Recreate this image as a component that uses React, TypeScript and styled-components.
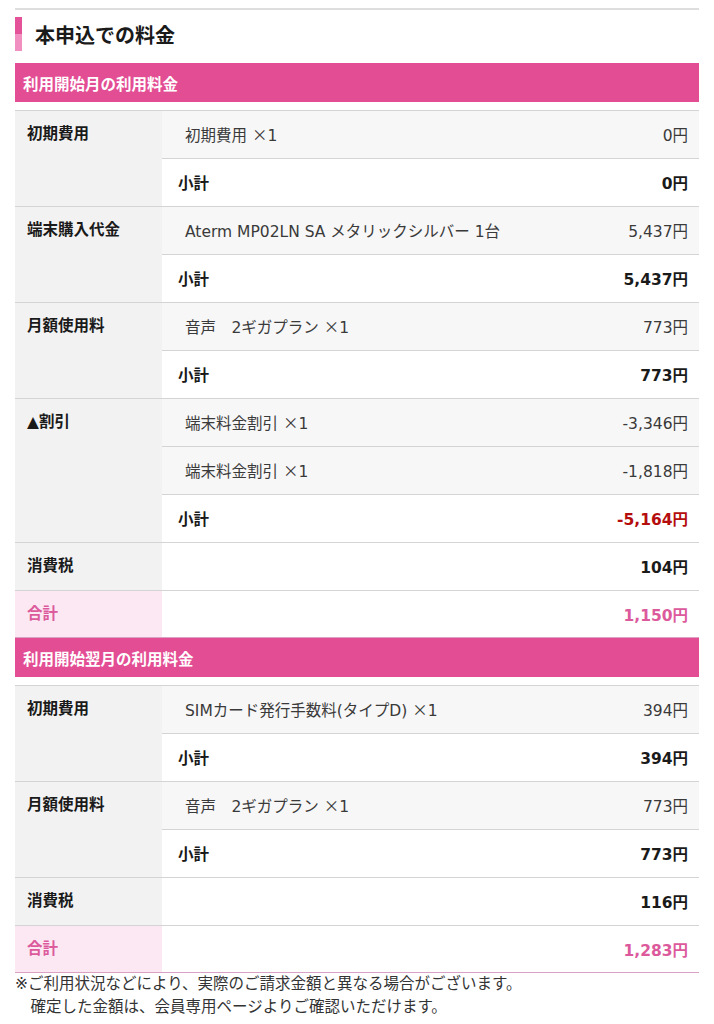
import React from "react";
import styled, { createGlobalStyle } from "styled-components";

const GlobalStyle = createGlobalStyle`
  body {
    margin: 0;
    background: #fff;
    font-family: "DejaVu Sans", "Noto Sans CJK JP", sans-serif;
    color: #333;
  }
`;

type Item = { name: string; amount: string };
type Group = { label: string; items: Item[]; subtotal: string; negative?: boolean };
type Section = { title: string; groups: Group[]; tax: string; total: string };

const sections: Section[] = [
  {
    title: "利用開始月の利用料金",
    groups: [
      { label: "初期費用", items: [{ name: "初期費用 ×1", amount: "0円" }], subtotal: "0円" },
      {
        label: "端末購入代金",
        items: [{ name: "Aterm MP02LN SA メタリックシルバー 1台", amount: "5,437円" }],
        subtotal: "5,437円",
      },
      { label: "月額使用料", items: [{ name: "音声　2ギガプラン ×1", amount: "773円" }], subtotal: "773円" },
      {
        label: "▲割引",
        items: [
          { name: "端末料金割引 ×1", amount: "-3,346円" },
          { name: "端末料金割引 ×1", amount: "-1,818円" },
        ],
        subtotal: "-5,164円",
        negative: true,
      },
    ],
    tax: "104円",
    total: "1,150円",
  },
  {
    title: "利用開始翌月の利用料金",
    groups: [
      {
        label: "初期費用",
        items: [{ name: "SIMカード発行手数料(タイプD) ×1", amount: "394円" }],
        subtotal: "394円",
      },
      { label: "月額使用料", items: [{ name: "音声　2ギガプラン ×1", amount: "773円" }], subtotal: "773円" },
    ],
    tax: "116円",
    total: "1,283円",
  },
];

const Page = styled.div`
  padding: 8px 15px 0;
`;

const TopRule = styled.div`
  height: 2px;
  background: #dedede;
`;

const Heading = styled.h2`
  display: flex;
  align-items: center;
  gap: 13px;
  height: 34px;
  margin: 7px 0 12px;
  font-family: "Noto Sans CJK JP", sans-serif;
  font-size: 20px;
  font-weight: 700;
  color: #1a1a1a;
  &::before {
    content: "";
    width: 7px;
    height: 34px;
    background: linear-gradient(#e4529a 0 50%, #f08fc0 50% 100%);
  }
`;

const SectionTitle = styled.div`
  height: 39px;
  display: flex;
  align-items: center;
  padding-left: 8px;
  margin-bottom: 8px;
  background: #e34d94;
  color: #fff;
  font-size: 15.5px;
  font-weight: 700;
`;

const Table = styled.table`
  width: 100%;
  border-collapse: collapse;
  border-top: 1px solid #d4d4d4;
  font-size: 15.5px;
`;

const Label = styled.th<{ $total?: boolean }>`
  width: 135px;
  padding: 0 0 0 12px;
  vertical-align: top;
  text-align: left;
  line-height: 46px;
  font-weight: 700;
  background: ${(p) => (p.$total ? "#fbe8f3" : "#f2f2f2")};
  color: ${(p) => (p.$total ? "#dc5a9c" : "#1a1a1a")};
  border-bottom: 1px solid ${(p) => (p.$total ? "#d9a2c2" : "#d4d4d4")};
`;

const Row = styled.tr<{ $total?: boolean }>`
  height: ${(p) => (p.$total ? "47px" : "48px")};
  ${(p) => p.$total && "border-top: 1px solid #d9a2c2;"}
`;

const Name = styled.td<{ $sub?: boolean; $tone?: "pink" }>`
  padding: 0 0 1px ${(p) => (p.$sub ? "16px" : "23px")};
  background: ${(p) => (p.$sub ? "#fff" : "#f7f7f7")};
  font-weight: ${(p) => (p.$sub ? 700 : 400)};
  color: ${(p) => (p.$sub ? "#1a1a1a" : "#3a3a3a")};
  border-bottom: 1px solid ${(p) => (p.$tone === "pink" ? "#d9a2c2" : "#d4d4d4")};
  white-space: nowrap;
`;

const Times = styled.span`
  font-family: "Noto Sans CJK JP", sans-serif;
`;

const Amount = styled.td<{ $sub?: boolean; $tone?: "red" | "pink" }>`
  padding: 0 11px 1px 0;
  text-align: right;
  background: ${(p) => (p.$sub ? "#fff" : "#f7f7f7")};
  font-weight: ${(p) => (p.$sub ? 700 : 400)};
  color: ${(p) =>
    p.$tone === "red" ? "#b50d0d" : p.$tone === "pink" ? "#dc5a9c" : p.$sub ? "#1a1a1a" : "#3a3a3a"};
  border-bottom: 1px solid ${(p) => (p.$tone === "pink" ? "#d9a2c2" : "#d4d4d4")};
  white-space: nowrap;
`;

const Note = styled.div`
  font-size: 15.5px;
  line-height: 23px;
  color: #333;
`;

const NoteLine = styled.div<{ $indent?: boolean }>`
  padding-left: ${(p) => (p.$indent ? "1em" : "0")};
`;

function ItemName({ text }: { text: string }) {
  const parts = text.split("×");
  if (parts.length < 2) return <>{text}</>;
  return (
    <>
      {parts[0]}
      <Times>×</Times>
      {parts[1]}
    </>
  );
}

function FeeSection({ section }: { section: Section }) {
  return (
    <>
      <SectionTitle>{section.title}</SectionTitle>
      <Table>
        <tbody>
          {section.groups.map((g, gi) => {
            const span = g.items.length + 1;
            return (
              <React.Fragment key={gi}>
                {g.items.map((it, ii) => (
                  <Row key={ii}>
                    {ii === 0 && <Label rowSpan={span}>{g.label}</Label>}
                    <Name>
                      <ItemName text={it.name} />
                    </Name>
                    <Amount>{it.amount}</Amount>
                  </Row>
                ))}
                <Row>
                  <Name $sub>小計</Name>
                  <Amount $sub $tone={g.negative ? "red" : undefined}>
                    {g.subtotal}
                  </Amount>
                </Row>
              </React.Fragment>
            );
          })}
          <Row>
            <Label>消費税</Label>
            <Name $sub />
            <Amount $sub>{section.tax}</Amount>
          </Row>
          <Row $total>
            <Label $total>合計</Label>
            <Name $sub $tone="pink" />
            <Amount $sub $tone="pink">
              {section.total}
            </Amount>
          </Row>
        </tbody>
      </Table>
    </>
  );
}

export default function App() {
  return (
    <>
      <GlobalStyle />
      <Page>
        <TopRule />
        <Heading>本申込での料金</Heading>
        {sections.map((s, i) => (
          <FeeSection key={i} section={s} />
        ))}
        <Note>
          <NoteLine>※ご利用状況などにより、実際のご請求金額と異なる場合がございます。</NoteLine>
          <NoteLine $indent>確定した金額は、会員専用ページよりご確認いただけます。</NoteLine>
        </Note>
      </Page>
    </>
  );
}
